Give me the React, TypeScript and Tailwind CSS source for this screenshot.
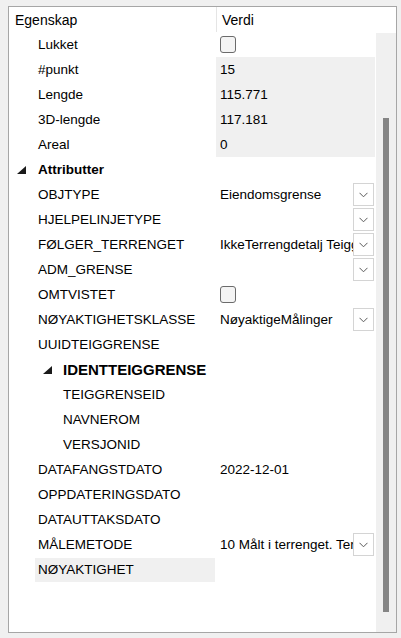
import React from "react";

type Row = {
  label: string;
  depth: 0 | 1 | 2;
  bold?: boolean;
  expander?: boolean;
  value?: string;
  kind?: "checkbox" | "text" | "none";
  readonly?: boolean;
  dropdown?: boolean;
  selected?: boolean;
};

const rows: Row[] = [
  { label: "Lukket", depth: 1, kind: "checkbox" },
  { label: "#punkt", depth: 1, value: "15", readonly: true },
  { label: "Lengde", depth: 1, value: "115.771", readonly: true },
  { label: "3D-lengde", depth: 1, value: "117.181", readonly: true },
  { label: "Areal", depth: 1, value: "0", readonly: true },
  { label: "Attributter", depth: 0, bold: true, expander: true },
  { label: "OBJTYPE", depth: 1, value: "Eiendomsgrense", dropdown: true },
  { label: "HJELPELINJETYPE", depth: 1, dropdown: true },
  { label: "FØLGER_TERRENGET", depth: 1, value: "IkkeTerrengdetalj Teiggrense", dropdown: true },
  { label: "ADM_GRENSE", depth: 1, dropdown: true },
  { label: "OMTVISTET", depth: 1, kind: "checkbox" },
  { label: "NØYAKTIGHETSKLASSE", depth: 1, value: "NøyaktigeMålinger", dropdown: true },
  { label: "UUIDTEIGGRENSE", depth: 1 },
  { label: "IDENTTEIGGRENSE", depth: 1, bold: true, expander: true },
  { label: "TEIGGRENSEID", depth: 2 },
  { label: "NAVNEROM", depth: 2 },
  { label: "VERSJONID", depth: 2 },
  { label: "DATAFANGSTDATO", depth: 1, value: "2022-12-01" },
  { label: "OPPDATERINGSDATO", depth: 1 },
  { label: "DATAUTTAKSDATO", depth: 1 },
  { label: "MÅLEMETODE", depth: 1, value: "10 Målt i terrenget. Terrengmålt", dropdown: true },
  { label: "NØYAKTIGHET", depth: 1, selected: true },
];

function Triangle() {
  return (
    <svg width="9" height="8" viewBox="0 0 9 8" className="block">
      <polygon points="9,0 9,8 0,8" fill="#1a1a1a" />
    </svg>
  );
}

function Checkbox() {
  return (
    <div className="w-[16px] h-[17px] rounded-[3px] border border-[#6b6b6b] bg-[#f4f4f4]" />
  );
}

function DropButton() {
  return (
    <div className="w-[21px] h-[23px] border border-[#d4d4d4] bg-white flex items-center justify-center shrink-0">
      <svg width="9" height="6" viewBox="0 0 9 6">
        <polyline points="0.5,0.8 4.5,4.8 8.5,0.8" fill="none" stroke="#5a5a5a" strokeWidth="1" />
      </svg>
    </div>
  );
}

function LabelCell({ row }: { row: Row }) {
  if (row.expander && row.depth === 0) {
    return (
      <div className="w-[207px] h-full flex items-center pl-[8px]">
        <div className="w-[21px] flex items-center"><Triangle /></div>
        <span className="font-bold text-[13.5px] pt-[1px]">{row.label}</span>
      </div>
    );
  }
  if (row.expander) {
    return (
      <div className="w-[207px] h-full flex items-center pl-[34px]">
        <div className="w-[20px] flex items-center"><Triangle /></div>
        <span className="font-bold text-[15px] whitespace-nowrap pt-[1px]">{row.label}</span>
      </div>
    );
  }
  const pad = row.depth === 2 ? "pl-[51px]" : "pl-[26px]";
  return (
    <div className={`w-[207px] h-full flex items-center ${pad}`}>
      <div
        className={`h-[24px] flex-1 flex items-center pl-[3px] mr-[1px] ${row.selected ? "bg-[#f0f0f0]" : ""}`}
      >
        <span className="text-[13.5px] whitespace-nowrap pt-[1px]">{row.label}</span>
      </div>
    </div>
  );
}

function ValueCell({ row }: { row: Row }) {
  return (
    <div
      className={`w-[159px] h-full flex items-center pl-[4px] ${row.readonly ? "bg-[#f0f0f0]" : ""}`}
    >
      {row.kind === "checkbox" ? (
        <Checkbox />
      ) : (
        <div className="flex-1 overflow-hidden whitespace-nowrap text-[13.5px] pt-[1px]">{row.value ?? ""}</div>
      )}
      {row.dropdown ? <DropButton /> : null}
      {row.dropdown ? <div className="w-[1px]" /> : null}
    </div>
  );
}

export default function App() {
  return (
    <div
      className="w-[401px] h-[638px] bg-[#f0f0f0] pt-[6px] pl-[8px] text-black"
      style={{ fontFamily: '"Liberation Sans", Arial, sans-serif' }}
    >
      <div className="w-[389px] h-[627px] border border-[#a6a6a6] bg-white flex flex-col">
        <div className="h-[25px] flex items-center shrink-0">
          <div className="w-[207px] pl-[6px] text-[14px] pt-[1px]">Egenskap</div>
          <div className="w-[1px] h-[25px] bg-[#e5e5e5]" />
          <div className="pl-[5px] text-[14px] pt-[1px]">Verdi</div>
        </div>
        <div className="flex flex-1 min-h-0">
          <div className="w-[366px] flex flex-col">
            {rows.map((r, i) => (
              <div key={i} className="h-[25px] flex shrink-0">
                <LabelCell row={r} />
                <ValueCell row={r} />
              </div>
            ))}
          </div>
          <div className="w-[1px]" />
          <div className="w-[20px] mt-[1px] bg-[#f0f0f0] pt-[85px] pl-[7px]">
            <div className="w-[6px] h-[494px] bg-[#858585]" />
          </div>
        </div>
      </div>
    </div>
  );
}
